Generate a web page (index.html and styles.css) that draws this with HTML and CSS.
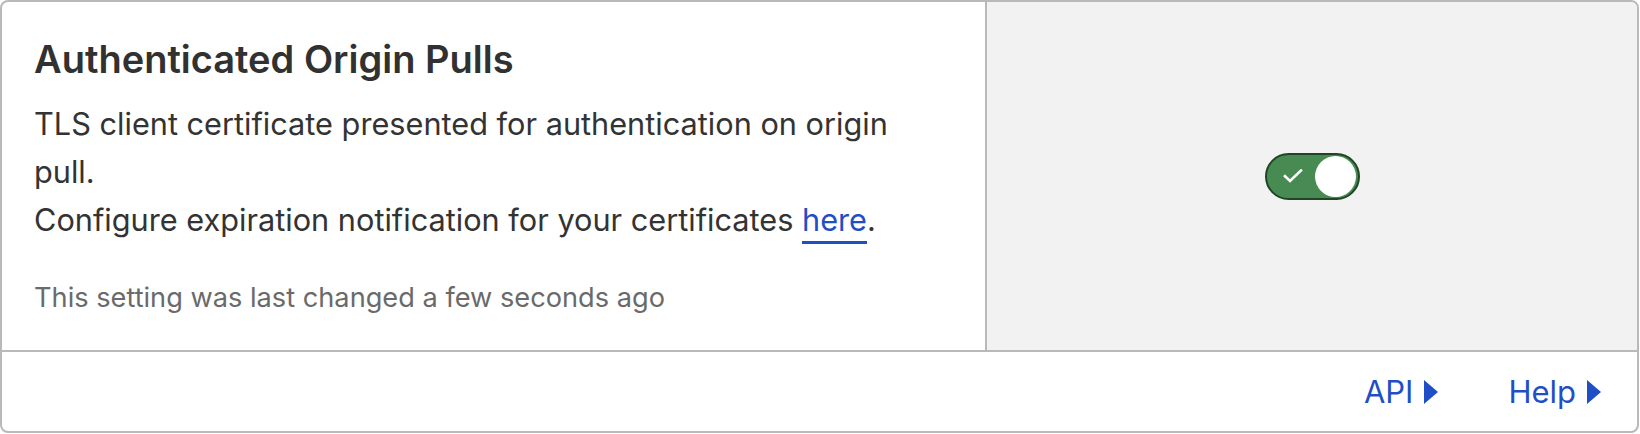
FILE: index.html
```html
<!DOCTYPE html>
<html lang="en">
<head>
<meta charset="utf-8">
<title>Authenticated Origin Pulls</title>
<link rel="stylesheet" href="styles.css">
</head>
<body>
<div class="card">
  <div class="card-main">
    <div class="info">
      <h2 class="title">Authenticated Origin Pulls</h2>
      <p class="desc">TLS client certificate presented for authentication on origin pull.<br>Configure expiration notification for your certificates <a class="link" href="#">here</a>.</p>
      <p class="meta">This setting was last changed a few seconds ago</p>
    </div>
    <div class="control">
      <button class="toggle" type="button" aria-pressed="true">
        <svg class="check" width="20" height="14" viewBox="0 0 20 14"><path d="M2 7.2 L7 12 L18 1.5" fill="none" stroke="#fff" stroke-width="2.6" stroke-linecap="square"/></svg>
        <span class="knob"></span>
      </button>
    </div>
  </div>
  <div class="card-footer">
    <a class="foot-link" href="#">API<span class="tri"></span></a>
    <a class="foot-link" href="#">Help<span class="tri"></span></a>
  </div>
</div>
</body>
</html>
```
FILE: styles.css
```css
html, body {
  margin: 0;
  padding: 0;
  background: #ffffff;
}
body {
  font-family: Inter, "Liberation Sans", sans-serif;
  color: #333333;
}
.card {
  box-sizing: border-box;
  width: 1639px;
  height: 433px;
  border: 2px solid #b9b9b9;
  border-radius: 8px;
  overflow: hidden;
  display: flex;
  flex-direction: column;
}
.card-main {
  display: flex;
  height: 348px;
  border-bottom: 2px solid #b9b9b9;
}
.info {
  box-sizing: border-box;
  width: 983px;
  padding: 36px 50px 0 32px;
}
.title {
  margin: 0;
  font-size: 38px;
  line-height: 42px;
  font-weight: 600;
  color: #313131;
}
.desc {
  margin: 20px 0 0 0;
  font-size: 30.7px;
  line-height: 48px;
  color: #333333;
}
.link {
  color: #1f4fc6;
  text-decoration: none;
  border-bottom: 3px solid #1f4fc6;
  padding-bottom: 3px;
}
.meta {
  margin: 36px 0 0 0;
  font-size: 27.2px;
  line-height: 36px;
  color: #6a6a6a;
}
.control {
  flex: 1;
  background: #f2f2f2;
  border-left: 2px solid #b9b9b9;
  display: flex;
  align-items: center;
  justify-content: center;
}
.toggle {
  box-sizing: border-box;
  width: 95px;
  height: 47px;
  border-radius: 24px;
  border: 2px solid #1f4526;
  background: #478b52;
  padding: 0 2px 0 16px;
  display: flex;
  align-items: center;
  justify-content: space-between;
  cursor: pointer;
}
.check {
  display: block;
}
.knob {
  width: 41px;
  height: 41px;
  border-radius: 50%;
  background: #ffffff;
}
.card-footer {
  flex: 1;
  display: flex;
  align-items: center;
  justify-content: flex-end;
  gap: 70px;
  padding-right: 36px;
}
.foot-link {
  display: flex;
  align-items: center;
  gap: 11px;
  font-size: 31px;
  line-height: 36px;
  color: #1f4fc6;
  text-decoration: none;
}
.tri {
  width: 0;
  height: 0;
  border-top: 12px solid transparent;
  border-bottom: 12px solid transparent;
  border-left: 14px solid #1f4fc6;
}
```
